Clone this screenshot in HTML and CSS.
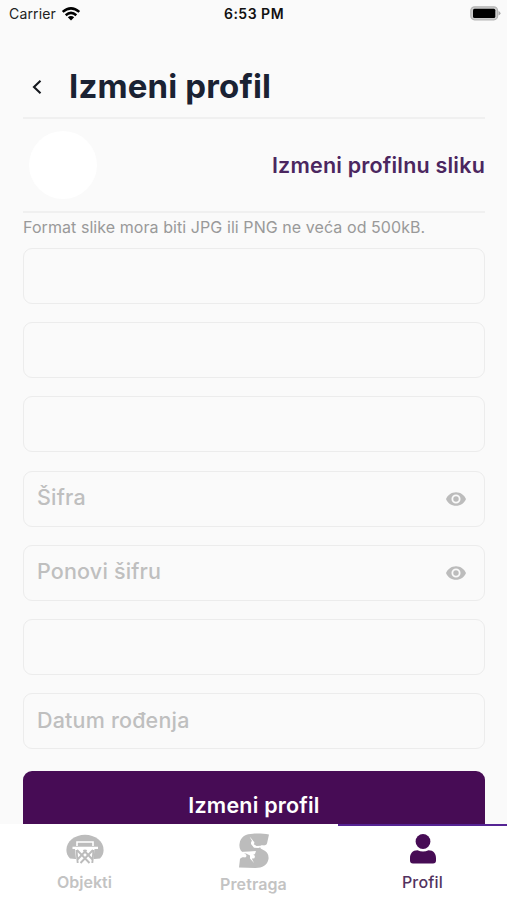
FILE: index.html
```html
<!DOCTYPE html>
<html lang="sr-Latn">
<head>
<meta charset="utf-8">
<title>Izmeni profil</title>
<link rel="stylesheet" href="styles.css">
</head>
<body>
<div class="screen">
  <div class="status">
    <div class="carrier"><span>Carrier</span>
      <svg width="20" height="14" viewBox="0 0 20 14"><g fill="none" stroke="#000" stroke-width="2.5"><path d="M1.7 4.9Q10-2.2 18.3 4.9"/><path d="M4.7 8.2Q10 3.5 15.3 8.2"/></g><path d="M6.8 10.2Q10 7.7 13.2 10.2L10 13.6z"/></svg>
    </div>
    <div class="clock">6:53 PM</div>
    <svg class="battery" width="31" height="15" viewBox="0 0 31 15"><rect x=".8" y=".8" width="26.8" height="13" rx="3.8" fill="#ccc" stroke="#b5b5b5" stroke-width="1.2"/><rect x="3" y="2.7" width="22.3" height="9.3" rx="1.5"/><path d="M28.5 5q2 .8 2 2.3t-2 2.3z" fill="#aaa"/></svg>
  </div>
  <main class="content">
    <header class="title-row">
      <svg class="back" width="10" height="14" viewBox="0 0 10 14"><path d="M8.500 .8L2 7l6.500 6.200" fill="none" stroke="#15181e" stroke-width="2.1"/></svg>
      <h1>Izmeni profil</h1>
    </header>
    <section class="photo-row"><div class="avatar"></div><a class="change">Izmeni profilnu sliku</a></section>
    <p class="hint">Format slike mora biti JPG ili PNG ne veća od 500kB.</p>
    <form class="form">
      <div class="field"></div>
      <div class="field"></div>
      <div class="field"></div>
      <div class="field"><span>Šifra</span><svg width="20" height="14" viewBox="1 4.5 22 15"><path d="M12 4.5C7 4.500 2.730 7.610 1 12c1.730 4.390 6 7.500 11 7.500s9.270-3.110 11-7.500c-1.730-4.390-6-7.500-11-7.500zM12 17a5 5 0 1 1 0-10 5 5 0 0 1 0 10zm0-8a3 3 0 1 0 0 6 3 3 0 0 0 0-6z"/></svg></div>
      <div class="field"><span>Ponovi šifru</span><svg width="20" height="14" viewBox="1 4.5 22 15"><path d="M12 4.5C7 4.500 2.730 7.610 1 12c1.730 4.390 6 7.500 11 7.500s9.270-3.110 11-7.500c-1.730-4.390-6-7.500-11-7.500zM12 17a5 5 0 1 1 0-10 5 5 0 0 1 0 10zm0-8a3 3 0 1 0 0 6 3 3 0 0 0 0-6z"/></svg></div>
      <div class="field"></div>
      <div class="field"><span>Datum rođenja</span></div>
      <div class="submit">Izmeni profil</div>
    </form>
  </main>
  <nav class="tabs">
    <div class="tab">
      <svg width="38" height="30" viewBox="0 0 38 30"><path fill="#bcbcbc" d="M4 24.500C1.500 22 .4 19 .4 16C.4 7 9 .7 19 .7S37.600 7 37.600 16c0 3-1.100 6-3.600 8.500l-5.500.5h-19z"/><path d="M11 12V8h16v4" fill="none" stroke="#fff" stroke-width="1.600"/><path fill="#fff" d="M6.500 12.800h25.500v2.200h-3.500l-1 10H10L9 15H6.500z"/><path d="M10.500 16l1.200 13M27.500 16l-1.200 13M11 16l12.500 13M17.500 16l9 9.500M27 16L14.500 29M20.500 16l-9 9.500" fill="none" stroke="#bcbcbc" stroke-width="1.900"/></svg>
      <span>Objekti</span>
    </div>
    <div class="tab search">
      <svg width="32" height="36" viewBox="0 0 32 36"><path fill="#bcbcbc" d="M31 1.500L29 10.500c-1 2-3 2.200-5 1.700-3 1-2 3.300.5 4.300 4.500 2 6.500 5 6 9.500-1 6-6 9-13 9L1 34.500 2 26c1-1.500 3-2 5-1.500 2-1 2-3-.5-4-4-2-5.500-5-5-9.500C2.500 3.500 8 .8 15 .8c6-.6 11 .2 16 .7z"/><path fill="#fff" d="M11.500 3.500l3.500 4 .5 3.500 3 2 8-.5-6 2.500-4.500-.3-3-3.700 1-3zM1 19l10-.5 7-.5-1 3-2 1-1 4 2 4-4-4.500 0-3-4-2-7 .2z"/><circle cx="14.700" cy="9.800" r="1.700" fill="#fff"/><circle cx="15" cy="23.700" r="1.900" fill="#fff"/></svg>
      <span>Pretraga</span>
    </div>
    <div class="tab active">
      <svg width="26" height="30" viewBox="0 0 26 30"><circle cx="13" cy="7.500" r="7.400"/><path d="M7.500 16.300q5.500 2.500 11 0c5 0 7.500 3.500 7.500 8v2.200q0 3-3 3H3q-3 0-3-3v-2.200c0-4.500 2.500-8 7.500-8z"/></svg>
      <span>Profil</span>
    </div>
  </nav>
</div>
</body>
</html>
```
FILE: styles.css
```css
* { box-sizing: border-box; }
body { margin: 0; font-family: Inter, "Liberation Sans", sans-serif; background: #fafafa; }
.screen { height: 900px; display: flex; flex-direction: column; overflow: hidden; }
svg { display: block; flex: none; }
.status { height: 28px; flex: none; display: grid; grid-template-columns: 1fr auto 1fr; align-items: center; padding: 0 6px 1px 9px; color: #111; font-size: 14px; line-height: 20px; }
.carrier { display: flex; align-items: center; gap: 5px; color: #222; letter-spacing: .15px; }
.clock { font-weight: 600; letter-spacing: .5px; margin-right: 2px; }
.battery { justify-self: end; }
.content { flex: 1; min-height: 0; overflow: hidden; padding: 0 22px 0 23px; }
.title-row { height: 91px; display: flex; align-items: center; padding: 28px 0 0 9px; border-bottom: 2px solid #f0f0f0; }
h1 { margin: 0 0 1px 27px; font-size: 33px; line-height: 42px; font-weight: 700; letter-spacing: .15px; color: #1a2233; white-space: nowrap; }
.photo-row { height: 94px; display: flex; align-items: center; justify-content: space-between; padding-left: 6px; border-bottom: 2px solid #f0f0f0; }
.avatar { width: 68px; height: 68px; border-radius: 50%; background: #fff; }
.change { color: #4b265f; font-size: 21.5px; font-weight: 600; letter-spacing: .2px; white-space: nowrap; }
.hint { margin: 3px 0 10px; font-size: 16px; line-height: 22px; letter-spacing: .07px; color: #999; white-space: nowrap; }
.form { display: grid; grid-auto-rows: 56px; gap: 18.2px; }
.field { display: flex; align-items: center; justify-content: space-between; padding: 0 18px 0 13px; border: 1.5px solid #ececec; border-radius: 9px; color: #bfbfbf; font-size: 21.5px; font-weight: 500; letter-spacing: .18px; }
.field span { padding-bottom: 3px; }
.field svg { fill: #bcbcbc; }
.submit { height: 66px; margin-top: 4px; background: #470c55; border-radius: 9px; color: #fff; text-align: center; font-size: 21.5px; font-weight: 600; letter-spacing: .2px; line-height: 69px; }
.tabs { height: 76px; flex: none; display: grid; grid-template-columns: repeat(3, 1fr); background: #fff; }
.tab { display: flex; flex-direction: column; align-items: center; padding-top: 10px; color: #c3c3c3; font-size: 16px; line-height: 20px; font-weight: 600; }
.tab span { margin-top: 8px; }
.search { padding-top: 9px; }
.search span { margin-top: 5px; letter-spacing: .1px; }
.active { border-top: 2px solid #552494; padding-top: 8px; color: #523260; font-weight: 500; }
.active span { letter-spacing: .2px; }
.active svg { fill: #470c55; }
```
